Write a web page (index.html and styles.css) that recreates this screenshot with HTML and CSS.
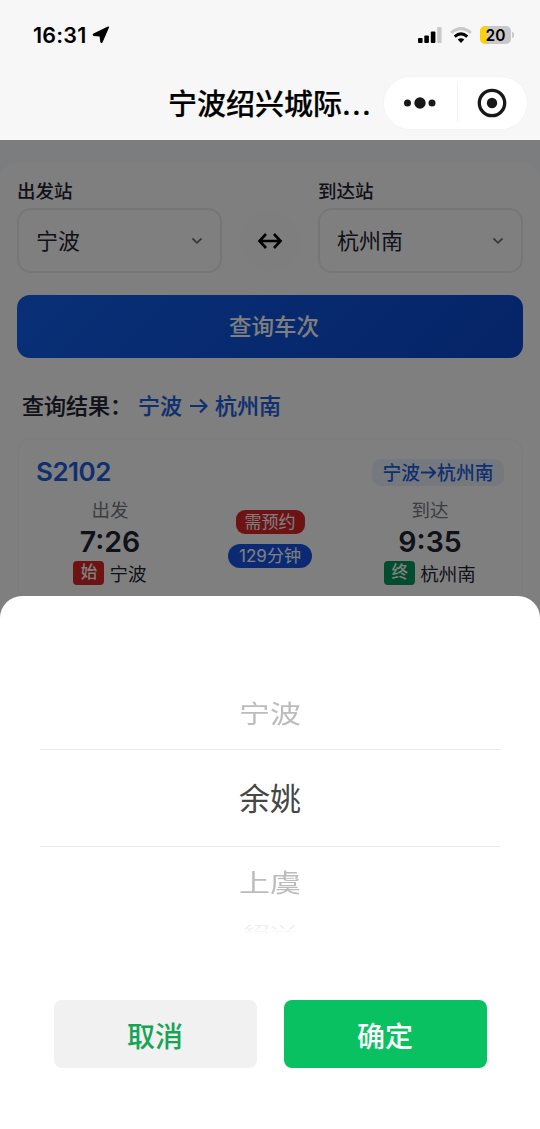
FILE: index.html
```html
<!DOCTYPE html>
<html lang="zh-CN">
<head>
<meta charset="utf-8">
<title>宁波绍兴城际</title>
<link rel="stylesheet" href="styles.css">
</head>
<body>
<div class="phone">
  <header class="top">
    <div class="status">
      <div class="clock"><span>16:31</span>
        <svg width="18" height="18" viewBox="0 0 18 18"><path d="M17 1.6 10.6 16.2Q9.3 18.2 8.3 16L7.6 10.6 1.7 10Q-.4 9 1.5 7.6L15.4.8Q17.6.1 17 1.6Z"/></svg>
      </div>
      <div class="signals">
        <svg width="24" height="17" viewBox="0 0 24 17"><rect x="0" y="11" width="4.6" height="5" rx="1"/><rect x="6.3" y="8.5" width="4.6" height="7.5" rx="1"/><rect x="12.8" y="4.5" width="4.6" height="11.5" rx="1"/><rect x="19.2" y="0" width="4.4" height="16" rx="1" fill="#c9c9c9"/></svg>
        <svg class="wifi" width="22" height="17" viewBox="0 0 22 17" fill="none" stroke="#000" stroke-width="3"><path d="M1.2 5.8Q11-2.5 20.8 5.8" stroke="#c9c9c9"/><path d="M4.7 9.6Q11 4.2 17.3 9.6"/><path d="M7.7 12.5Q11 10 14.3 12.5L11 16Z" fill="#000" stroke="none"/></svg>
        <div class="battery"><span>20</span></div><i class="battery-tip"></i>
      </div>
    </div>
    <div class="nav">
      <h1>宁波绍兴城际<span class="dots">...</span></h1>
      <div class="capsule">
        <svg width="34" height="14" viewBox="0 0 34 14"><circle cx="4.5" cy="7" r="3.5"/><circle cx="17" cy="7" r="5.7"/><circle cx="29" cy="7" r="3.5"/></svg>
        <i></i>
        <svg width="30" height="30" viewBox="0 0 30 30"><circle cx="15" cy="15" r="12.7" fill="none" stroke="#181818" stroke-width="3.3"/><circle cx="15" cy="15" r="5.2"/></svg>
      </div>
    </div>
  </header>

  <main class="page">
    <section class="panel">
      <div class="search">
        <div class="field"><label>出发站</label><div class="select"><span>宁波</span><svg width="12" height="8" viewBox="0 0 12 8"><path d="M1.5 1.5 6 5.8 10.5 1.5"/></svg></div></div>
        <div class="swap"><svg width="26" height="18" viewBox="0 0 26 18"><path d="M2.5 9H23.5M9 2 2.5 9 9 16M17 2 23.5 9 17 16"/></svg></div>
        <div class="field"><label>到达站</label><div class="select"><span>杭州南</span><svg width="12" height="8" viewBox="0 0 12 8"><path d="M1.5 1.5 6 5.8 10.5 1.5"/></svg></div></div>
      </div>
      <div class="query">查询车次</div>
      <div class="result"><span class="result-label">查询结果：</span><b>宁波</b><svg width="18" height="16" viewBox="0 0 18 16"><path d="M0 8H16.5M10 1.5 16.5 8 10 14.5"/></svg><b>杭州南</b></div>
      <article class="train">
        <div class="train-head"><strong>S2102</strong><div class="route"><span>宁波</span><svg width="17" height="15" viewBox="0 0 18 16"><path d="M1 8H16M10 2 16 8 10 14"/></svg><span>杭州南</span></div></div>
        <div class="trip">
          <div class="stop"><small>出发</small><time>7:26</time><div class="station"><em class="tag-red">始</em><span>宁波</span></div></div>
          <div class="middle"><span class="reserve">需预约</span><span class="duration">129分钟</span></div>
          <div class="stop"><small>到达</small><time>9:35</time><div class="station"><em class="tag-green">终</em><span>杭州南</span></div></div>
        </div>
      </article>
    </section>
    <div class="mask"></div>
  </main>

  <section class="sheet">
    <div class="picker">
      <div class="option near">宁波</div>
      <div class="option current">余姚</div>
      <div class="option near">上虞</div>
      <div class="option far"><span>绍兴</span></div>
    </div>
    <div class="actions"><button class="cancel">取消</button><button class="confirm">确定</button></div>
  </section>
</div>
</body>
</html>
```
FILE: styles.css
```css
* { box-sizing: border-box; }
body { margin: 0; font-family: Inter, "Noto Sans CJK SC", sans-serif; color: #1f2430; }
.phone { width: 540px; height: 1129px; position: relative; overflow: hidden; background: #fff; }
svg { display: block; flex: none; }

.top { height: 140px; background: #f7f7f7; color: #000; }
.status { height: 70px; display: flex; justify-content: space-between; padding: 0 26px 0 33px; align-items: center; }
.clock { display: flex; align-items: center; gap: 5px; font-size: 21.5px; font-weight: 600; letter-spacing: .2px; }
.clock span { width: 54px; white-space: nowrap; }
.signals { display: flex; align-items: center; }
.wifi { margin: 0 8px; }
.battery { width: 31px; height: 18px; border-radius: 5px; background: linear-gradient(90deg, #fdd00b 7px, #c8c8c8 7px); display: flex; justify-content: center; align-items: center; font-size: 15.5px; font-weight: 600; }
.battery-tip { width: 2px; height: 6px; margin-left: 1px; border-radius: 0 2px 2px 0; background: #c8c8c8; }
.nav { display: flex; justify-content: flex-end; align-items: center; height: 66px; padding-right: 13px; }
.nav h1 { margin: 0 12px 0 0; padding-top: 4px; font-size: 29px; line-height: 40px; font-weight: 500; white-space: nowrap; -webkit-text-stroke: .2px #000; }
.dots { letter-spacing: 1.2px; }
.capsule { width: 143px; height: 52px; border-radius: 26px; background: #fff; box-shadow: 0 0 0 1px #f4f4f4; display: flex; align-items: center; padding: 0 20px 0 19px; justify-content: space-between; fill: #181818; }
.capsule i { width: 1px; height: 38px; background: #f2f2f2; }

.page { height: 480px; position: relative; background: #f9fafc; padding-top: 22px; overflow: hidden; }
.mask { position: absolute; inset: 0; background: rgba(0, 0, 0, .5); }
.panel { height: 480px; border-radius: 18px 18px 0 0; background: #fff; padding: 16px 17px 0; }
.search { display: flex; justify-content: space-between; align-items: flex-end; }
.field { width: 205px; }
.field label { display: block; height: 30px; line-height: 26px; font-size: 18.5px; font-weight: 500; }
.select { height: 65px; border: 2px solid #ebedf0; border-radius: 14px; padding: 0 17px; display: flex; align-items: center; justify-content: space-between; font-size: 22px; }
.select span { padding-bottom: 4px; }
.select svg { fill: none; stroke: #6b7280; stroke-width: 1.8; }
.swap { width: 60px; height: 60px; margin-bottom: 2px; border-radius: 50%; background: #fcfcfc; display: flex; align-items: center; justify-content: center; }
.swap svg { fill: none; stroke: #000; stroke-width: 2.6; }
.query { margin-top: 22px; height: 63px; border-radius: 13px; background: linear-gradient(135deg, #1260ee, #0c48d0); color: #fff; display: flex; align-items: center; justify-content: center; padding: 0 0 3px 8px; font-size: 22.5px; font-weight: 500; }
.result { margin: 31px 0 0 5px; height: 34px; display: flex; align-items: center; font-size: 22px; font-weight: 500; }
.result b, .result-label { font-weight: 500; padding-bottom: 4px; }
.result b { color: #1e5fdf; -webkit-text-stroke: .2px #1e5fdf; }
.result-label { width: 116px; white-space: nowrap; -webkit-text-stroke: .2px #1f2430; }
.result svg { margin: 0 7px 0 8px; }
.result svg, .route svg { fill: none; stroke: #1e5fdf; stroke-width: 2.2; }
.train { margin-top: 15px; height: 200px; border: 2px solid #fafafa; border-radius: 14px; padding: 19px 17px; }
.train-head { display: flex; justify-content: space-between; align-items: center; height: 27px; }
.train-head strong { font-size: 26px; line-height: 25px; padding-bottom: 2px; font-weight: 600; letter-spacing: -.5px; color: #1e5fdf; }
.route { height: 27px; width: 132px; border-radius: 9px; background: #ebf3fd; color: #1e5fdf; display: flex; align-items: center; justify-content: center; font-size: 18.8px; font-weight: 500; }
.route span { padding-bottom: 3px; }
.trip { display: flex; justify-content: space-between; margin-top: 11px; }
.stop { width: 148px; display: flex; flex-direction: column; align-items: center; }
.stop small { font-size: 18.5px; line-height: 26px; color: #777b82; }
.stop time { font-size: 28.5px; line-height: 38px; height: 36px; font-weight: 600; }
.station { display: flex; gap: 5px; align-items: center; height: 28px; font-size: 18.5px; }
.station em { width: 31px; height: 24px; border-radius: 4px; color: #fff; font-style: normal; font-size: 16.5px; line-height: 23px; text-align: center; font-weight: 500; }
.tag-red { background: #dc2626; }
.tag-green { background: #04995e; }
.middle { display: flex; flex-direction: column; align-items: center; gap: 10px; padding-top: 13px; color: #fff; font-size: 17px; line-height: 24px; }
.reserve { width: 69px; height: 24px; text-align: center; border-radius: 9px; background: #dc2626; }
.duration { width: 84px; height: 24px; text-align: center; border-radius: 12px; background: #1655e6; }

.sheet { position: absolute; left: 0; right: 0; top: 596px; bottom: 0; border-radius: 22px 22px 0 0; background: #fff; }
.picker { margin: 82px 40px 0; height: 262px; display: flex; flex-direction: column; align-items: center; }
.option { flex: none; width: 460px; text-align: center; font-size: 31px; }
.near { height: 71px; line-height: 71px; color: #bcbcbc; transform: scaleY(.8); }
.current { height: 98px; line-height: 97px; color: #464646; border: solid #e9e9e9; border-width: 1px 0; }
.far { height: 22px; color: #ebebeb; font-size: 27px; }
.far span { display: block; line-height: 40px; transform: translateY(5px) scaleY(.42); transform-origin: top; -webkit-mask-image: linear-gradient(#000 15%, transparent 75%); mask-image: linear-gradient(#000 15%, transparent 75%); }
.actions { display: flex; justify-content: center; gap: 27px; margin-top: 60px; }
.actions button { width: 203px; height: 68px; border: 0; border-radius: 8px; padding: 1px 0 0; font: 500 28px Inter, "Noto Sans CJK SC", sans-serif; }
.cancel { background: #f1f1f1; color: #18a457; }
.confirm { background: #09c160; color: #fff; }
```
